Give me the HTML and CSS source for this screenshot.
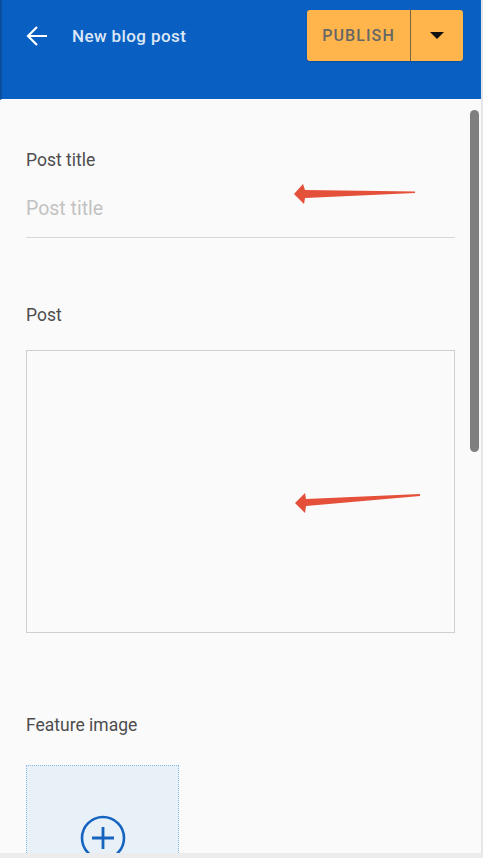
FILE: index.html
```html
<!doctype html>
<html lang="en">
  <head>
    <meta charset="UTF-8" />
    <meta name="viewport" content="width=device-width, initial-scale=1.0" />
    <title>New blog post</title>
    <link rel="stylesheet" href="styles.css">
  </head>
  <body>
    <div class="frame">
      <header class="topbar">
        <div class="topbar-left">
          <svg class="back" width="22" height="22" viewBox="0 0 22 22">
            <path d="M2 11H21M11 2L2 11L11 20" fill="none" stroke="#fff" stroke-width="2.2" />
          </svg>
          <span class="title">New blog post</span>
        </div>
        <div class="publish">
          <button class="publish-main">PUBLISH</button>
          <button class="publish-more">
            <svg width="16" height="8" viewBox="0 0 16 8"><path d="M1 0H15L8 7Z" fill="#111" /></svg>
          </button>
        </div>
      </header>

      <main class="content">
        <label class="label">Post title</label>
        <input class="title-input" type="text" placeholder="Post title" />

        <label class="label label-post">Post</label>
        <textarea class="post-input"></textarea>

        <label class="label label-image">Feature image</label>
        <div class="upload">
          <svg width="46" height="46" viewBox="0 0 46 46">
            <circle cx="23" cy="23" r="21" fill="none" stroke="#1565c0" stroke-width="2.6" />
            <path d="M23 12V34M12 23H34" stroke="#1565c0" stroke-width="2.8" />
          </svg>
        </div>
      </main>

      <!-- annotation arrows over the screenshot -->
      <svg class="notes" width="483" height="858" viewBox="0 0 483 858">
        <polygon points="294,194 303,184 305,190 415,191.5 415,193 305,198 304,204" fill="#e4503a" />
        <polygon points="295,503 305,493 306,499 420,494 420,496 306,506 305,513" fill="#e4503a" />
      </svg>

      <div class="scroll-thumb"></div>
    </div>
  </body>
</html>
```

FILE: styles.css
```css
html,
body {
  margin: 0;
  padding: 0;
  font-family: Roboto, 'Liberation Sans', sans-serif;
  background: #fafafa;
}
.frame {
  position: relative;
  width: 483px;
  height: 858px;
  box-sizing: border-box;
  overflow: hidden;
  border-right: 2px solid #e6e6e6;
  border-bottom: 5px solid #ececec;
  background: #fafafa;
}
.topbar {
  height: 100px;
  box-sizing: border-box;
  padding: 10px 18px 0 26px;
  background: #0a60c2;
  border-bottom: 1px solid #fff;
  border-left: 2px solid #0a4f9e;
  display: flex;
  align-items: flex-start;
  justify-content: space-between;
}
.topbar-left {
  height: 51px;
  display: flex;
  align-items: center;
  gap: 24px;
  margin-left: -2px;
}
.back {
  display: block;
}
.title {
  color: #dce7f6;
  font-size: 17px;
  font-weight: 500;
  letter-spacing: 0.4px;
}
.publish {
  display: flex;
  height: 51px;
  border-radius: 3px;
  overflow: hidden;
  background: #ffb54c;
  box-shadow: 0 1px 2px rgba(0, 0, 0, 0.2);
}
.publish button {
  border: none;
  background: transparent;
  padding: 0;
  font-family: inherit;
  cursor: pointer;
}
.publish-main {
  width: 104px;
  color: #666;
  font-size: 16px;
  font-weight: 500;
  letter-spacing: 1.1px;
  border-right: 1px solid #7a6440 !important;
}
.publish-more {
  width: 52px;
  display: flex;
  align-items: center;
  justify-content: center;
}
.content {
  padding: 50px 26px 0 26px;
  display: flex;
  flex-direction: column;
}
.label {
  display: block;
  font-size: 17.5px;
  line-height: 20px;
  color: #4d4d4d;
}
.title-input {
  display: block;
  margin-top: 20px;
  height: 48px;
  box-sizing: border-box;
  padding: 0 0 11px 0;
  border: none;
  border-bottom: 1px solid #d9d9d9;
  background: transparent;
  font-family: inherit;
  font-size: 19.5px;
  color: #333;
  outline: none;
}
.title-input::placeholder {
  color: #c2c2c2;
}
.label-post {
  margin-top: 67px;
}
.post-input {
  display: block;
  margin-top: 25px;
  height: 283px;
  box-sizing: border-box;
  border: 1px solid #cfcfcf;
  background: #fafafa;
  resize: none;
  outline: none;
}
.label-image {
  margin-top: 82px;
}
.upload {
  margin-top: 30px;
  width: 153px;
  height: 146px;
  box-sizing: border-box;
  border: 1px dotted #8ab9e6;
  background: #e8f0f8;
  display: flex;
  align-items: center;
  justify-content: center;
}
.notes {
  position: absolute;
  left: 0;
  top: 0;
  pointer-events: none;
}
.scroll-thumb {
  position: absolute;
  left: 470px;
  top: 110px;
  width: 9px;
  height: 342px;
  border-radius: 5px;
  background: #7f7f7f;
}
```
